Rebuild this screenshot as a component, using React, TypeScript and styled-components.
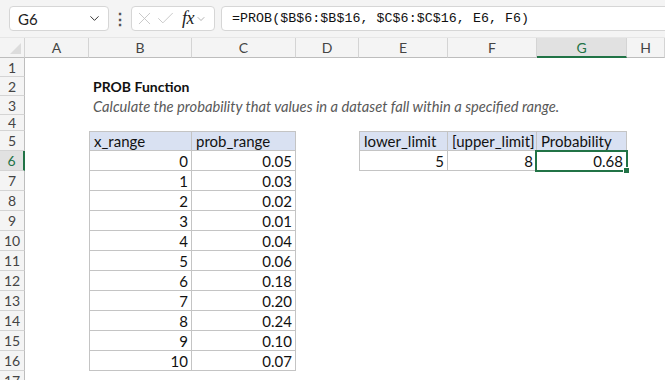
import React from "react";
import styled, { createGlobalStyle } from "styled-components";
import { ChevronDown, X, Check } from "lucide-react";

const GlobalStyle = createGlobalStyle`
  body {
    margin: 0;
    background: #fff;
    overflow: hidden;
    font-family: "Lato", "Liberation Sans", sans-serif;
  }
`;

const COLS = ["A", "B", "C", "D", "E", "F", "G", "H"];
const ROW_HEIGHTS = [19, 19, 19, 16, 20, 20, 20, 20, 20, 20, 20, 20, 20, 20, 20, 20, 20];
const SEL_COL = "G";
const SEL_ROW = 6;

type Kind = "title" | "subtitle" | "head" | "num";
type CellData = { text: string; kind: Kind; first?: boolean; top?: boolean };

const probs = ["0.05", "0.03", "0.02", "0.01", "0.04", "0.06", "0.18", "0.20", "0.24", "0.10", "0.07"];

const cells: Record<string, CellData> = {
  B2: { text: "PROB Function", kind: "title" },
  B3: {
    text: "Calculate the probability that values in a dataset fall within a specified range.",
    kind: "subtitle",
  },
  B5: { text: "x_range", kind: "head", first: true, top: true },
  C5: { text: "prob_range", kind: "head", top: true },
  E5: { text: "lower_limit", kind: "head", first: true, top: true },
  F5: { text: "[upper_limit]", kind: "head", top: true },
  G5: { text: "Probability", kind: "head", top: true },
  E6: { text: "5", kind: "num", first: true },
  F6: { text: "8", kind: "num" },
  G6: { text: "0.68", kind: "num" },
};
probs.forEach((p, i) => {
  cells[`B${i + 6}`] = { text: String(i), kind: "num", first: true };
  cells[`C${i + 6}`] = { text: p, kind: "num" };
});

export default function App() {
  return (
    <>
      <GlobalStyle />
      <TopBar>
        <NameBox>
          <span>G6</span>
          <ChevronDown size={15} strokeWidth={1.6} color="#333" />
        </NameBox>
        <Dots>⋮</Dots>
        <FxBox>
          <X size={21} strokeWidth={1} color="#c2c2c2" />
          <Check size={21} strokeWidth={1} color="#c2c2c2" />
          <FxLabel>fx</FxLabel>
          <ChevronDown size={12} strokeWidth={1.3} color="#888" />
        </FxBox>
        <FormulaBox>=PROB($B$6:$B$16, $C$6:$C$16, E6, F6)</FormulaBox>
      </TopBar>
      <Sheet>
        <Corner>
          <CornerTriangle />
        </Corner>
        {COLS.map((c) => (
          <ColHead key={c} $selected={c === SEL_COL}>
            {c}
          </ColHead>
        ))}
        {ROW_HEIGHTS.map((h, i) => {
          const r = i + 1;
          return (
            <React.Fragment key={r}>
              <RowHead $h={h} $selected={r === SEL_ROW}>
                {r}
              </RowHead>
              {COLS.map((c) => {
                const d = cells[`${c}${r}`];
                const selected = c === SEL_COL && r === SEL_ROW;
                return (
                  <Cell
                    key={c}
                    $h={h}
                    $kind={d?.kind}
                    $first={d?.first}
                    $top={d?.top}
                  >
                    {d?.text}
                    {selected && (
                      <Selection>
                        <Handle />
                      </Selection>
                    )}
                  </Cell>
                );
              })}
            </React.Fragment>
          );
        })}
      </Sheet>
    </>
  );
}

const TopBar = styled.div`
  height: 38px;
  box-sizing: border-box;
  background: #f4f4f4;
  border-bottom: 1px solid #e6e6e6;
  display: flex;
  align-items: center;
  padding-left: 9px;
  overflow: hidden;
`;

const Box = styled.div`
  height: 25px;
  box-sizing: border-box;
  background: #fff;
  border: 1px solid #d6d6d6;
  border-radius: 4px;
  display: flex;
  align-items: center;
`;

const NameBox = styled(Box)`
  width: 100px;
  justify-content: space-between;
  padding: 0 6px 0 8px;
  font-size: 15px;
  color: #222;
`;

const Dots = styled.div`
  width: 22px;
  text-align: center;
  font-size: 16px;
  font-weight: bold;
  color: #555;
`;

const FxBox = styled(Box)`
  width: 84px;
  padding: 0 2px 0 2px;
  gap: 0;
`;

const FxLabel = styled.span`
  font-family: "Liberation Serif", serif;
  font-style: italic;
  font-size: 18px;
  color: #222;
  margin-left: 6px;
  margin-right: 1px;
  letter-spacing: -0.5px;
`;

const FormulaBox = styled(Box)`
  flex: 1;
  margin-left: 6px;
  margin-right: -6px;
  padding-left: 10px;
  font-family: "Liberation Mono", monospace;
  font-size: 13.3px;
  letter-spacing: 0.05px;
  color: #111;
  white-space: nowrap;
`;

const Sheet = styled.div`
  display: grid;
  grid-template-columns: 25px 64px 103px 104px 63px 89px 89px 90px 1fr;
  grid-auto-rows: auto;
`;

const Corner = styled.div`
  height: 20px;
  box-sizing: border-box;
  background: #f4f4f4;
  border-right: 1px solid #d4d4d4;
  border-bottom: 1px solid #bdbdbd;
  position: relative;
`;

const CornerTriangle = styled.div`
  position: absolute;
  right: 3px;
  bottom: 3px;
  width: 0;
  height: 0;
  border-left: 11px solid transparent;
  border-bottom: 11px solid #dcdcdc;
`;

const ColHead = styled.div<{ $selected?: boolean }>`
  height: 20px;
  box-sizing: border-box;
  display: flex;
  align-items: center;
  justify-content: center;
  font-size: 14px;
  background: ${(p) => (p.$selected ? "#e1e1e1" : "#f4f4f4")};
  color: ${(p) => (p.$selected ? "#217346" : "#444")};
  border-right: 1px solid #d4d4d4;
  border-bottom: ${(p) => (p.$selected ? "2px solid #217346" : "1px solid #bdbdbd")};
`;

const RowHead = styled.div<{ $h: number; $selected?: boolean }>`
  height: ${(p) => p.$h}px;
  box-sizing: border-box;
  display: flex;
  align-items: center;
  justify-content: center;
  font-size: 14px;
  background: ${(p) => (p.$selected ? "#e1e1e1" : "#f4f4f4")};
  color: ${(p) => (p.$selected ? "#217346" : "#444")};
  border-bottom: 1px solid #d4d4d4;
  border-right: ${(p) => (p.$selected ? "2px solid #217346" : "1px solid #bdbdbd")};
`;

const Cell = styled.div<{ $h: number; $kind?: Kind; $first?: boolean; $top?: boolean }>`
  position: relative;
  height: ${(p) => p.$h}px;
  min-width: 0;
  box-sizing: border-box;
  display: flex;
  align-items: center;
  justify-content: ${(p) => (p.$kind === "num" ? "flex-end" : "flex-start")};
  padding: 0 3px 0 4px;
  white-space: nowrap;
  font-size: ${(p) => (p.$kind === "title" ? "14px" : p.$kind === "subtitle" ? "14.7px" : "15px")};
  color: #111;
  font-weight: ${(p) => (p.$kind === "title" ? 700 : 400)};
  font-style: ${(p) => (p.$kind === "subtitle" ? "italic" : "normal")};
  ${(p) => p.$kind === "subtitle" && "color: #595959;"}
  background: ${(p) => (p.$kind === "head" ? "#d9e1f2" : "transparent")};
  ${(p) =>
    (p.$kind === "head" || p.$kind === "num") &&
    "border-right: 1px solid #c4c4c4; border-bottom: 1px solid #c4c4c4;"}
  ${(p) => p.$first && "border-left: 1px solid #c4c4c4;"}
  ${(p) => p.$top && "border-top: 1px solid #c4c4c4;"}
`;

const Selection = styled.div`
  position: absolute;
  top: -1px;
  left: -2px;
  right: -2px;
  bottom: -2px;
  border: 2px solid #217346;
  pointer-events: none;
`;

const Handle = styled.div`
  position: absolute;
  right: -4px;
  bottom: -4px;
  width: 5px;
  height: 5px;
  background: #217346;
  border: 1px solid #fff;
`;
